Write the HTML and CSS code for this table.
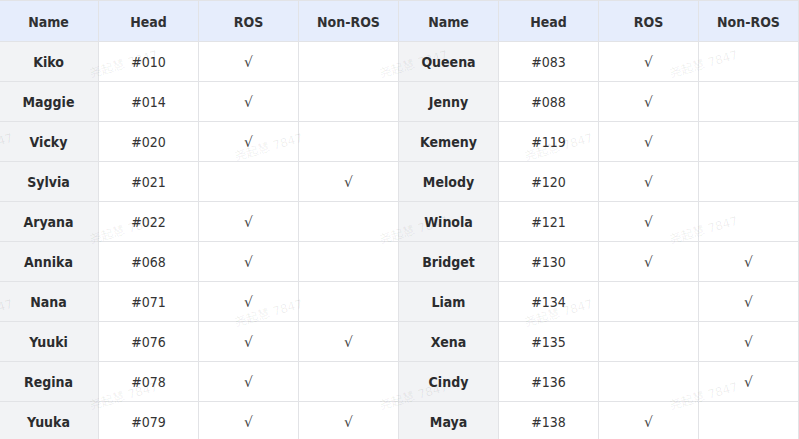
FILE: index.html
```html
<!DOCTYPE html>
<html>
<head>
<meta charset="utf-8">
<link rel="stylesheet" href="styles.css">
</head>
<body>
<div class="wrap">
<table class="grid">
<thead>
<tr><th>Name</th><th>Head</th><th>ROS</th><th>Non-ROS</th><th>Name</th><th>Head</th><th>ROS</th><th>Non-ROS</th></tr>
</thead>
<tbody>
<tr><td class="nm">Kiko</td><td>#010</td><td class="ck">√</td><td class="ck"></td><td class="nm">Queena</td><td>#083</td><td class="ck">√</td><td class="ck"></td></tr>
<tr><td class="nm">Maggie</td><td>#014</td><td class="ck">√</td><td class="ck"></td><td class="nm">Jenny</td><td>#088</td><td class="ck">√</td><td class="ck"></td></tr>
<tr><td class="nm">Vicky</td><td>#020</td><td class="ck">√</td><td class="ck"></td><td class="nm">Kemeny</td><td>#119</td><td class="ck">√</td><td class="ck"></td></tr>
<tr><td class="nm">Sylvia</td><td>#021</td><td class="ck"></td><td class="ck">√</td><td class="nm">Melody</td><td>#120</td><td class="ck">√</td><td class="ck"></td></tr>
<tr><td class="nm">Aryana</td><td>#022</td><td class="ck">√</td><td class="ck"></td><td class="nm">Winola</td><td>#121</td><td class="ck">√</td><td class="ck"></td></tr>
<tr><td class="nm">Annika</td><td>#068</td><td class="ck">√</td><td class="ck"></td><td class="nm">Bridget</td><td>#130</td><td class="ck">√</td><td class="ck">√</td></tr>
<tr><td class="nm">Nana</td><td>#071</td><td class="ck">√</td><td class="ck"></td><td class="nm">Liam</td><td>#134</td><td class="ck"></td><td class="ck">√</td></tr>
<tr><td class="nm">Yuuki</td><td>#076</td><td class="ck">√</td><td class="ck">√</td><td class="nm">Xena</td><td>#135</td><td class="ck"></td><td class="ck">√</td></tr>
<tr><td class="nm">Regina</td><td>#078</td><td class="ck">√</td><td class="ck"></td><td class="nm">Cindy</td><td>#136</td><td class="ck"></td><td class="ck">√</td></tr>
<tr><td class="nm">Yuuka</td><td>#079</td><td class="ck">√</td><td class="ck">√</td><td class="nm">Maya</td><td>#138</td><td class="ck">√</td><td class="ck"></td></tr>
</tbody>
</table>
<div class="marks">
  <div class="mrow a"><span>尧起慧 7847</span><span>尧起慧 7847</span><span>尧起慧 7847</span></div>
  <div class="mrow b"><span>尧起慧 7847</span><span>尧起慧 7847</span><span>尧起慧 7847</span></div>
  <div class="mrow a"><span>尧起慧 7847</span><span>尧起慧 7847</span><span>尧起慧 7847</span></div>
  <div class="mrow b"><span>尧起慧 7847</span><span>尧起慧 7847</span><span>尧起慧 7847</span></div>
  <div class="mrow a"><span>尧起慧 7847</span><span>尧起慧 7847</span><span>尧起慧 7847</span></div>
</div>
</div>
</body>
</html>
```
FILE: styles.css
```css
html, body {
  margin: 0;
  padding: 0;
  background: #fff;
  overflow: hidden;
}
.wrap {
  position: relative;
  width: 799px;
  height: 439px;
  overflow: hidden;
}
.grid {
  border-collapse: collapse;
  table-layout: fixed;
  width: 801px;
  margin-left: -2px;
  font-family: "DejaVu Sans Condensed", "DejaVu Sans", sans-serif;
  font-size: 14px;
  color: #333;
}
.grid th, .grid td {
  border: 1px solid #e2e3e6;
  text-align: center;
  padding: 0;
  width: 99px;
}
.grid th {
  height: 38px;
  padding-top: 2px;
  background: #e6edfc;
  font-weight: bold;
  color: #303133;
}
.grid td {
  height: 39px;
}
.grid td.nm {
  background: #f2f3f5;
  font-weight: bold;
  color: #2b2c2e;
}
.grid td.ck {
  color: #444;
  font-family: "DejaVu Sans", sans-serif;
  font-size: 14px;
}
.marks {
  position: absolute;
  inset: 0;
  pointer-events: none;
  padding-top: 21px;
}
.mrow {
  display: flex;
  align-items: center;
  height: 83px;
  gap: 218px;
}
.mrow.a { padding-left: 88px; }
.mrow.b { margin-left: -57px; }
.mrow span {
  display: block;
  width: 72px;
  white-space: nowrap;
  transform: rotate(-16deg);
  font-family: "DejaVu Sans", "Noto Sans CJK SC", sans-serif;
  font-size: 12px;
  color: rgba(0, 0, 0, 0.07);
}
```
